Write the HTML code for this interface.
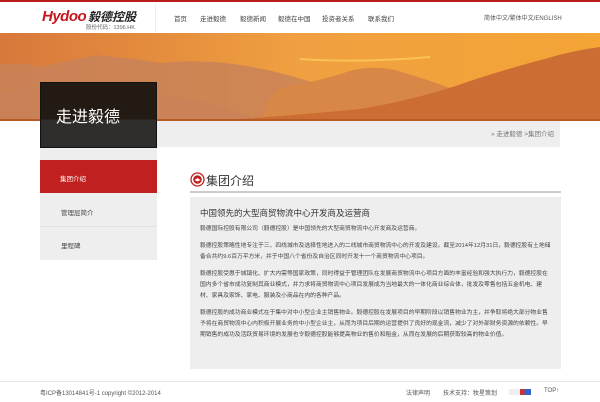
<!DOCTYPE html>
<html><head><meta charset="utf-8"><style>
*{margin:0;padding:0;box-sizing:border-box}
body{width:600px;height:402px;overflow:hidden;position:relative;background:#fff;font-family:"Liberation Sans","Noto Sans CJK SC",sans-serif;color:#333}
.a{position:absolute;white-space:nowrap}
.nav{font-size:6.5px;color:#444;top:13px}
.p{font-size:5.8px;color:#444;left:200px;line-height:11px;white-space:nowrap}
</style></head><body>
<div class="a" style="left:0;top:0;width:600px;height:2px;background:#b81c1c"></div>
<div class="a" style="left:42px;top:8px;font:italic bold 15px 'Liberation Sans',sans-serif;color:#c8161d;letter-spacing:-0.5px">Hydoo</div>
<div class="a" style="left:88px;top:8px;font-size:12px;font-weight:bold;font-style:italic;color:#222">毅德控股</div>
<div class="a" style="left:86px;top:23px;font-size:5.5px;color:#666">股份代码：1396.HK</div>
<div class="a" style="left:155px;top:4px;width:1px;height:28px;background:#eee"></div>
<div class="a nav" style="left:174px">首页</div>
<div class="a nav" style="left:200px">走进毅德</div>
<div class="a nav" style="left:240px">毅德新闻</div>
<div class="a nav" style="left:278px">毅德在中国</div>
<div class="a nav" style="left:322px">投资者关系</div>
<div class="a nav" style="left:368px">联系我们</div>
<div class="a" style="left:484px;top:13px;font-size:6px;color:#555">简体中文/繁体中文/ENGLISH</div>
<svg class="a" style="left:0;top:33px" width="600" height="88" viewBox="0 0 600 88">
<defs><linearGradient id="s" x1="0" y1="0" x2="1" y2="0"><stop offset="0" stop-color="#d8783c"/><stop offset="0.5" stop-color="#f0a040"/><stop offset="1" stop-color="#f4a536"/></linearGradient></defs>
<rect width="600" height="88" fill="url(#s)"/>
<path d="M300 26 Q360 30 430 24" stroke="#fcd060" stroke-width="2" fill="none" opacity="0.7"/>
<path d="M0 32 Q20 28 40 34 Q70 28 95 22 Q130 25 160 30 Q200 26 240 32 Q280 38 320 52 Q350 66 370 88 L0 88Z" fill="#c98358" opacity="0.85"/>
<path d="M280 55 Q320 48 350 38 Q370 32 395 37 Q420 44 450 55 Q470 70 480 88 L260 88 Q270 62 280 55Z" fill="#d88746"/>
<path d="M210 88 Q300 82 360 76 Q420 66 470 48 Q520 32 545 26 Q570 18 600 14 L600 88Z" fill="#cc6e34"/>
<path d="M0 60 Q50 52 120 58 Q200 62 260 88 L0 88Z" fill="#c88058" opacity="0.6"/>
<rect y="86" width="600" height="2" fill="#b85a25"/>
</svg>
<div class="a" style="left:157px;top:121px;width:403px;height:26px;background:#eee"></div>
<div class="a" style="left:491px;top:128px;font-size:6.5px;color:#777">» 走进毅德 &gt;集团介绍</div>
<div class="a" style="left:40px;top:82px;width:117px;height:66px;background:linear-gradient(#231a14 0 57%,#2f2e2c 57%);border:1px solid #111"></div>
<div class="a" style="left:56px;top:103px;font-size:16px;color:#fff">走进毅德</div>
<div class="a" style="left:40px;top:148px;width:117px;height:12px;background:#eee"></div>
<div class="a" style="left:40px;top:160px;width:117px;height:33px;background:#c0201f"></div>
<div class="a" style="left:60px;top:173px;font-size:6.5px;color:#fff">集团介绍</div>
<div class="a" style="left:40px;top:193px;width:117px;height:67px;background:#eee"></div>
<div class="a" style="left:40px;top:226px;width:117px;height:1px;background:#e2e2e2"></div>
<div class="a" style="left:61px;top:207px;font-size:6.5px;color:#444">管理层简介</div>
<div class="a" style="left:61px;top:240px;font-size:6.5px;color:#444">里程碑</div>
<svg class="a" style="left:190px;top:172px" width="15" height="15"><circle cx="7.5" cy="7.5" r="6.5" fill="#fff" stroke="#c0201f" stroke-width="1.3"/><circle cx="7.5" cy="7.5" r="4.3" fill="#c0201f"/><path d="M4.5 8 L7.5 6 L10.5 8 L7.5 9.5Z" fill="#fff"/></svg>
<div class="a" style="left:206px;top:172px;font-size:12px;color:#333">集团介绍</div>
<div class="a" style="left:190px;top:191px;width:371px;height:2px;background:#ccc"></div>
<div class="a" style="left:190px;top:197px;width:371px;height:172px;background:#eee"></div>
<div class="a" style="left:200px;top:207px;font-size:8.5px;color:#333">中国领先的大型商贸物流中心开发商及运营商</div>
<div class="a p" style="top:224px">毅德国际控股有限公司（毅德控股）是中国领先的大型商贸物流中心开发商及运营商。</div>
<div class="a p" style="top:241px">毅德控股策略性地专注于三、四线城市及选择性地进入的二线城市商贸物流中心的开发及建设。截至2014年12月31日，毅德控股有土地储<br>备合共约9.6百万平方米，并于中国八个省份及自治区同时开发十一个商贸物流中心项目。</div>
<div class="a p" style="top:269px">毅德控股受惠于城镇化、扩大内需等国家政策，同时得益于管理团队在发展商贸物流中心项目方面的丰富经验和强大执行力，毅德控股在<br>国内多个省市成功复制其商业模式，并力求将商贸物流中心项目发展成为当地最大的一体化商业综合体，批发及零售包括五金机电、建<br>材、家具及家饰、家电、服装及小商品在内的各种产品。</div>
<div class="a p" style="top:308px">毅德控股的成功商业模式在于集中对中小型企业主销售物业。毅德控股在发展项目的早期阶段以销售物业为主，并争取将绝大部分物业售<br>予将在商贸物流中心内积极开展业务的中小型企业主，从而为项目后期的运营提供了良好的现金流，减少了对外部财务资源的依赖性。早<br>期销售的成功及活跃贸易环境的发展也令毅德控股能够提高物业的售价和租金，从而在发展的后期获取较高的物业价值。</div>
<div class="a" style="left:0;top:381px;width:600px;height:1px;background:#e6e6e6"></div>
<div class="a" style="left:40px;top:388px;font-size:6px;color:#555">粤ICP备13014841号-1 copyright ©2012-2014</div>
<div class="a" style="left:406px;top:388px;font-size:6px;color:#555">法律声明</div>
<div class="a" style="left:443px;top:388px;font-size:6px;color:#555">技术支持：牧星策划</div>
<div class="a" style="left:509px;top:389px;width:22px;height:6px;background:linear-gradient(90deg,#eee 50%,#c33 50% 70%,#36c 70%)"></div>
<div class="a" style="left:544px;top:388px;font-size:6px;color:#555">TOP↑</div>
</body></html>
